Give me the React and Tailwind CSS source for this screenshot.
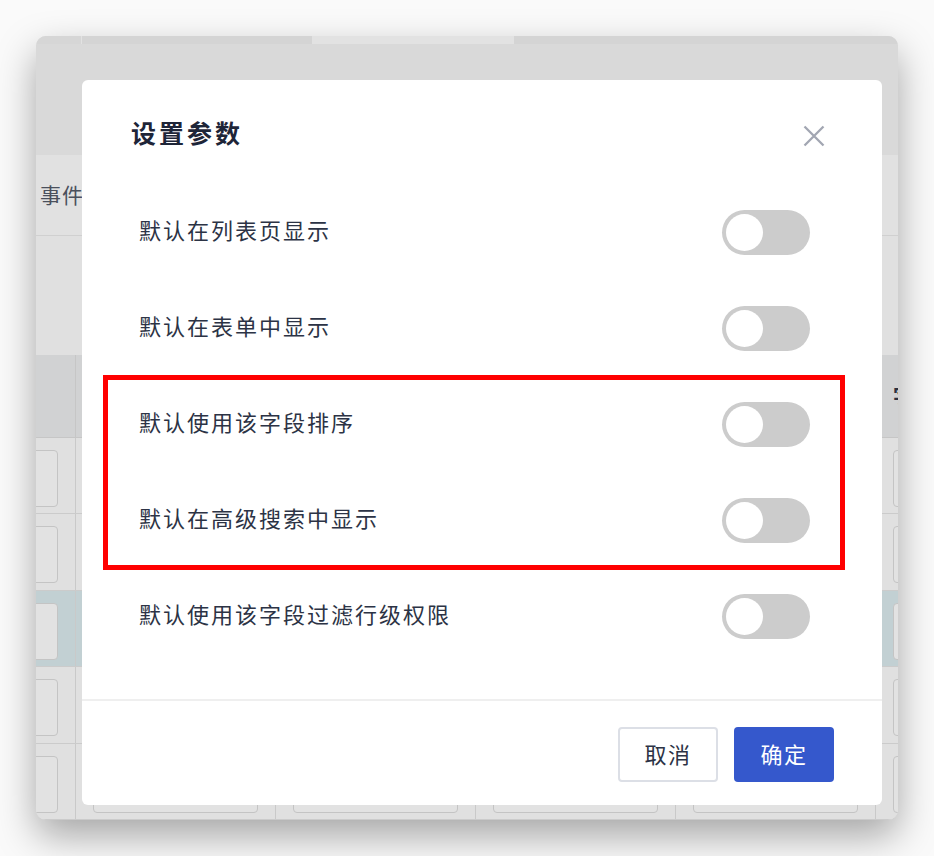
import React from "react";

const font = "font-['Noto_Sans_CJK_SC','Noto_Sans',sans-serif]";

function Toggle() {
  return (
    <div className="w-[88px] h-[45px] rounded-full bg-[#cccccc] p-[4px] flex items-center">
      <div className="w-[37px] h-[37px] rounded-full bg-white" />
    </div>
  );
}

function Box({ text, className = "" }) {
  return (
    <div
      className={`h-[57px] rounded-[4px] border border-[#c4c4c4] bg-[#e2e2e2] flex items-center pl-[20px] text-[20px] text-[#a8a8a8] whitespace-nowrap overflow-hidden ${className}`}
    >
      {text}
    </div>
  );
}

function TableRow({ bg = "bg-[#e0e0e0]", h = "h-[80px]", texts = [] }) {
  return (
    <div className={`flex ${h} ${bg} border-b border-[#cbcbcb]`}>
      <div className="w-[40px] shrink-0 border-r border-[#c9c9c9] pt-[12px] pr-[18px] overflow-hidden">
        <Box className="ml-[-30px] w-[52px]" />
      </div>
      {[0, 1, 2, 3].map((i) => (
        <div key={i} className="w-[200px] shrink-0 border-r border-[#c9c9c9] pt-[12px] pl-[17px] pr-[17px]">
          <Box text={texts[i]} />
        </div>
      ))}
      <div className="flex-1 pt-[12px] pl-[17px] overflow-hidden">
        <Box className="w-[60px]" />
      </div>
    </div>
  );
}

function Row({ label }) {
  return (
    <div className="h-[96px] flex items-center justify-between pl-[57px] pr-[72px]">
      <span className="text-[22px] tracking-[2px] text-[#2c3345] leading-none mb-[6px]">{label}</span>
      <Toggle />
    </div>
  );
}

export default function App() {
  const labels = [
    "默认在列表页显示",
    "默认在表单中显示",
    "默认使用该字段排序",
    "默认在高级搜索中显示",
    "默认使用该字段过滤行级权限",
  ];
  return (
    <div className={`relative w-[934px] h-[856px] bg-[#fafafa] overflow-hidden ${font}`}>
      <div className="pt-[36px] pl-[36px]">
        <div className="w-[862px] h-[784px] rounded-[10px] overflow-hidden bg-[#dadada] shadow-[0_16px_38px_rgba(0,0,0,0.34)] flex flex-col">
          {/* top strip */}
          <div className="h-[8px] flex shrink-0">
            <div className="w-[46px] bg-[#d6d6d6] border-r border-[#e2e2e2]" />
            <div className="w-[230px] bg-[#d4d4d4]" />
            <div className="w-[202px] bg-[#e2e2e2]" />
            <div className="flex-1 bg-[#d4d4d4]" />
          </div>
          <div className="h-[111px] bg-[#d9d9d9] shrink-0" />
          <div className="h-[81px] bg-[#e1e1e1] border-b border-[#d0d0d0] flex items-center pl-[4px] shrink-0">
            <span className="text-[21px] text-[#4a505c] tracking-[1px]">事件设置</span>
          </div>
          <div className="h-[119px] bg-[#e0e0e0] shrink-0" />
          {/* header row */}
          <div className="h-[83px] flex bg-[#d1d2d3] border-b border-[#c6c6c6] shrink-0">
            <div className="w-[40px] border-r border-[#c6c6c6]" />
            <div className="w-[200px] border-r border-[#c6c6c6]" />
            <div className="w-[200px] border-r border-[#c6c6c6]" />
            <div className="w-[200px] border-r border-[#c6c6c6]" />
            <div className="w-[200px] border-r border-[#c6c6c6]" />
            <div className="flex-1 flex items-center pl-[17px] overflow-hidden">
              <span className="text-[20px] font-bold text-[#2a3040] whitespace-nowrap">字段</span>
            </div>
          </div>
          <TableRow />
          <TableRow />
          <TableRow bg="bg-[#c2d0d3]" />
          <TableRow />
          <TableRow texts={["请选择", "默认值设定", "更新值设定", "默认值"]} />
        </div>
      </div>

      {/* Modal */}
      <div className="absolute left-[82px] top-[80px] w-[800px] h-[725px] bg-white rounded-[6px] flex flex-col">
        <div className="h-[104px] pt-[4px] flex items-center justify-between pl-[49px] pr-[57px] shrink-0">
          <span className="text-[25px] font-bold tracking-[3px] text-[#1e2538] leading-none mb-[4px]">设置参数</span>
          <svg width="22" height="22" viewBox="0 0 22 22" className="mt-[4px]">
            <path d="M1.5 1.5 L20.5 20.5 M20.5 1.5 L1.5 20.5" stroke="#a2a6b2" strokeWidth="2.3" fill="none" />
          </svg>
        </div>
        {labels.map((l) => (
          <Row key={l} label={l} />
        ))}
        <div className="flex-1" />
        <div className="h-[106px] border-t-2 border-[#efefef] flex items-start justify-end gap-[16px] pr-[48px] pt-[26px] shrink-0">
          <button className="w-[100px] h-[55px] rounded-[4px] border-2 border-[#dcdfe6] bg-white text-[22px] tracking-[1.5px] text-[#2c3345] pb-[3px]">
            取消
          </button>
          <button className="w-[100px] h-[55px] rounded-[4px] bg-[#3558cc] text-[22px] tracking-[1.5px] text-white pb-[3px]">
            确定
          </button>
        </div>
        {/* annotation */}
        <div className="absolute left-[21px] top-[295px] w-[742px] h-[195px] border-[5px] border-[#ff0000] pointer-events-none" />
      </div>
    </div>
  );
}
